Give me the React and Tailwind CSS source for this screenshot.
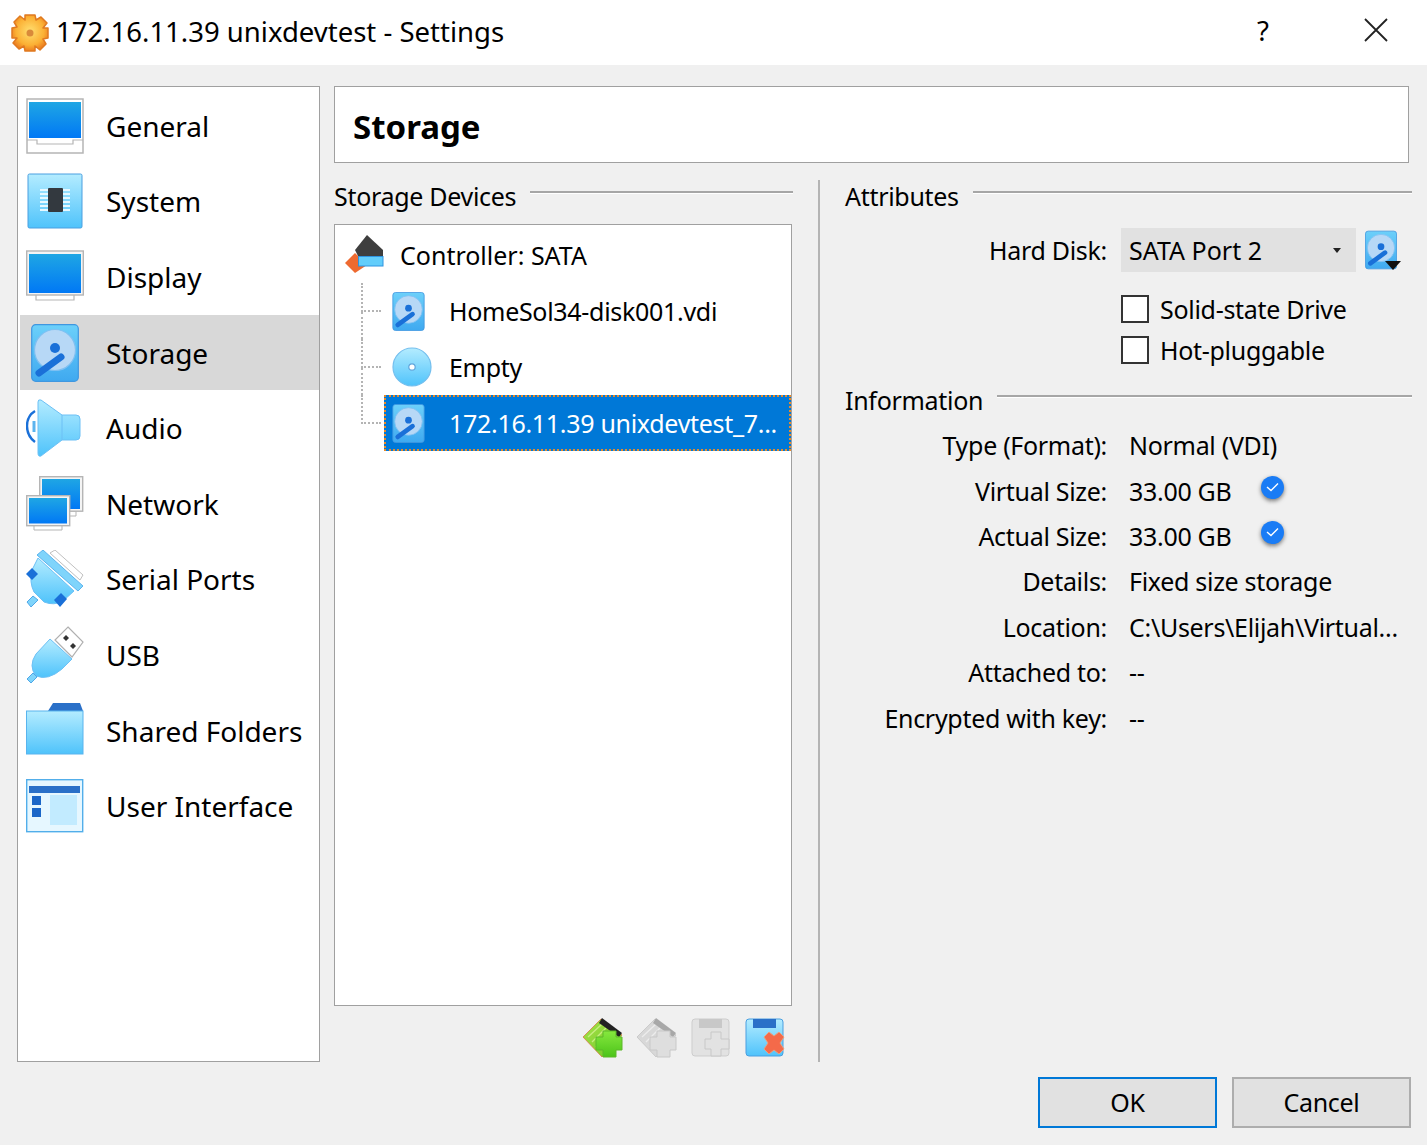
import React from 'react';

// shared gradient defs, each icon svg points at these ids
const Gradients = () => (
    <svg width="0" height="0" className="absolute">
        <defs>
            <linearGradient id="screen" x1="0" y1="0" x2="0" y2="1">
                <stop offset="0" stopColor="#1fa6e4" />
                <stop offset="1" stopColor="#0078f5" />
            </linearGradient>
            <linearGradient id="sky" x1="0" y1="0" x2="0" y2="1">
                <stop offset="0" stopColor="#b4ecff" />
                <stop offset="1" stopColor="#4fc3fb" />
            </linearGradient>
            <linearGradient id="hd" x1="0" y1="0" x2="0" y2="1">
                <stop offset="0" stopColor="#6cd0fa" />
                <stop offset="1" stopColor="#3fa9f0" />
            </linearGradient>
            <linearGradient id="leaf" x1="0" y1="0" x2="1" y2="1">
                <stop offset="0" stopColor="#a8e24a" />
                <stop offset="1" stopColor="#6cc824" />
            </linearGradient>
            <linearGradient id="plus" x1="0" y1="0" x2="0" y2="1">
                <stop offset="0" stopColor="#86e83e" />
                <stop offset="1" stopColor="#4cc41a" />
            </linearGradient>
            <radialGradient id="gear" cx="0.5" cy="0.45" r="0.6">
                <stop offset="0" stopColor="#ffdf70" />
                <stop offset="0.65" stopColor="#fbb034" />
                <stop offset="1" stopColor="#e8701a" />
            </radialGradient>
        </defs>
    </svg>
);

const Icon58 = ({ children }) => (
    <svg width="58" height="58" viewBox="0 0 58 58" className="shrink-0">{children}</svg>
);

const GeneralIcon = () => (
    <Icon58>
        <rect x="1" y="2" width="56" height="54" fill="#fff" stroke="#b5b5b5" strokeWidth="1.5" />
        <rect x="3" y="5" width="52" height="36" fill="url(#screen)" />
        <path d="M1 43H11V47H47V43H57" fill="none" stroke="#b5b5b5" strokeWidth="1.2" />
    </Icon58>
);

const SystemIcon = () => (
    <Icon58>
        <rect x="2" y="2" width="54" height="54" rx="1.5" fill="url(#sky)" stroke="#4a9fe0" />
        <path d="M14 18H44M14 22H44M14 26H44M14 30H44M14 34H44M14 38H44" stroke="#e6f8ff" strokeWidth="2" />
        <rect x="22" y="16" width="15" height="24" rx="1" fill="#33393f" />
    </Icon58>
);

const DisplayIcon = () => (
    <Icon58>
        <path d="M10 46H48V52H10Z" fill="#fff" stroke="#b5b5b5" strokeWidth="1.2" />
        <rect x="0.7" y="3" width="56.6" height="44" fill="#f4f4f4" stroke="#b5b5b5" strokeWidth="1.4" />
        <rect x="3" y="6" width="52" height="39" fill="url(#screen)" />
    </Icon58>
);

// hard disk drawing, used in the sidebar, the tree and next to the combo box
const DiskIcon = ({ w = 48, h = 58 }) => (
    <svg width={w} height={h} viewBox="0 0 48 58" className="shrink-0">
        <rect x="0.7" y="0.7" width="46.6" height="56.6" rx="4" fill="url(#hd)" stroke="#3f97e0" strokeWidth="1.2" />
        <circle cx="24" cy="26" r="20.5" fill="#b7d8f6" stroke="#7fc0f2" strokeWidth="1.2" />
        <circle cx="24" cy="24" r="5" fill="#1a70d8" />
        <path d="M30 33L8 49" stroke="#1a70d8" strokeWidth="7" strokeLinecap="round" />
    </svg>
);

const StorageIcon = () => (
    <div className="w-[58px] flex justify-center shrink-0">
        <DiskIcon />
    </div>
);

const AudioIcon = () => (
    <Icon58>
        <path d="M1 27Q1 17 9 12" fill="none" stroke="#1a70d8" strokeWidth="2.4" />
        <path d="M1 27Q1 37 9 43" fill="none" stroke="#1a70d8" strokeWidth="2.4" />
        <path d="M8 22V33" stroke="#5cb4ee" strokeWidth="3" />
        <path d="M12 3Q12 0 15 1L36 16H50Q54 16 54 20V37Q54 41 50 41H36L15 57Q12 58 12 54Z" fill="url(#sky)" stroke="#6cc0f5" />
        <path d="M36 16V41" stroke="#6cc0f5" />
    </Icon58>
);

const NetworkIcon = () => (
    <Icon58>
        <path d="M24 36H50V41H24Z" fill="#fff" stroke="#b5b5b5" />
        <rect x="13.7" y="1.7" width="43" height="34.5" fill="#f4f4f4" stroke="#b5b5b5" strokeWidth="1.4" />
        <rect x="16" y="4" width="38" height="30" fill="url(#screen)" />
        <path d="M8 50H36V55H8Z" fill="#fff" stroke="#b5b5b5" />
        <rect x="0.7" y="20.7" width="43" height="30" fill="#f4f4f4" stroke="#b5b5b5" strokeWidth="1.4" />
        <rect x="3" y="23" width="38" height="25.5" fill="url(#screen)" />
    </Icon58>
);

const SerialIcon = () => (
    <Icon58>
        <path d="M29 0L57 25L54 30L24 3Z" fill="#fff" stroke="#c0c0c0" />
        <path d="M17 0L57 36L52 41L11 5Z" fill="#7fd4fb" stroke="#5cb4ee" />
        <path d="M12 8L48 41L37 51Q28 56 18 52L8 42Q3 32 6 20Z" fill="url(#sky)" stroke="#6cc0f5" />
        <path d="M0 24L6 18L12 24L6 30Z" fill="#1a70d8" />
        <path d="M28 50L35 43L41 49L34 57Z" fill="#1a70d8" />
        <path d="M1 52L7 46L12 50L5 57Z" fill="#7fd4fb" stroke="#4fa8e8" />
    </Icon58>
);

const UsbIcon = () => (
    <Icon58>
        <path d="M42 1L57 16L46 31L29 14Z" fill="#fff" stroke="#b0b0b0" strokeWidth="1.2" />
        <path d="M37 12L40 9L43 12L40 15Z" fill="#333" />
        <path d="M44 20L47 17L50 20L47 23Z" fill="#333" />
        <path d="M24 13L46 33L36 43Q22 55 10 50Q2 40 10 28Z" fill="url(#sky)" stroke="#6cc0f5" />
        <path d="M1 53L7 47L11 51L5 57Z" fill="#7fd4fb" stroke="#4fa8e8" />
    </Icon58>
);

const FolderIcon = () => (
    <Icon58>
        <path d="M22 9L27 1H54L57 9Z" fill="#2a70c8" />
        <rect x="0.5" y="9" width="56.5" height="43" fill="url(#sky)" stroke="#58b4ee" />
    </Icon58>
);

const InterfaceIcon = () => (
    <Icon58>
        <rect x="0.7" y="2.7" width="56" height="52" fill="#e6f7ff" stroke="#52aeea" strokeWidth="1.4" />
        <rect x="3" y="9" width="51" height="7" fill="#2a70c8" />
        <rect x="6" y="19" width="9" height="9" fill="#1a66c8" />
        <rect x="6" y="31" width="9" height="9" fill="#1a66c8" />
        <rect x="24" y="18" width="27" height="30" fill="#c2ebff" />
    </Icon58>
);

const ControllerIcon = () => (
    <svg width="44" height="44" viewBox="0 0 44 44" className="shrink-0">
        <path d="M1 30L11 20L23 32L11 40Z" fill="#ee6a30" />
        <path d="M23 2L39 17V23H14L11 17Z" fill="#3e3e3e" />
        <rect x="14.5" y="23.5" width="24.5" height="9.5" fill="#62cdfb" stroke="#2f94e0" />
    </svg>
);

const EmptyDisc = () => (
    <svg width="40" height="40" viewBox="0 0 40 40" className="shrink-0">
        <circle cx="20" cy="20" r="19" fill="url(#sky)" stroke="#74bfee" strokeWidth="1.2" />
        <circle cx="20" cy="20" r="3.2" fill="#fff" stroke="#5fa5dc" strokeWidth="1.2" />
    </svg>
);

const GearIcon = () => (
    <svg width="40" height="40" viewBox="0 0 40 40" className="shrink-0">
        <g fill="url(#gear)" stroke="#e07a20" strokeWidth="1.5" strokeLinejoin="round">
            <path d="M15 2H25L26 7L31 4L37 10L33 15L38 15V25L33 26L36 31L30 37L25 33V38H15L14 33L9 36L3 30L7 25L2 25V15L7 14L4 9L10 3L15 7Z" />
        </g>
        <circle cx="20" cy="20" r="3.5" fill="#d98a3a" />
    </svg>
);

const GreenAdd = ({ gray }) => (
    <svg width="40" height="40" viewBox="0 0 40 40" className="shrink-0">
        <path d="M0 19L18 1L39 17L19 39Z" fill={gray ? '#d8d8d8' : 'url(#leaf)'} stroke={gray ? '#c4c4c4' : '#d97a4a'} strokeWidth="0.8" />
        <path d="M5 19L19 6M9 24L23 10M13 29L27 14" stroke={gray ? '#ececec' : '#c6ee80'} strokeWidth="1.4" />
        <path d="M19 0L39 15L36 19L16 5Z" fill={gray ? '#a8a8a8' : '#222'} />
        <path d="M20 13H33V19H39V32H33V39H20V32H13V19H20Z" fill={gray ? '#dedede' : 'url(#plus)'} stroke={gray ? '#c8c8c8' : '#5cb82a'} />
    </svg>
);

const Floppy = ({ children, gray }) => (
    <svg width="40" height="40" viewBox="0 0 40 40" className="shrink-0">
        <rect x="1" y="1" width="37" height="37" rx="3" fill={gray ? '#e2e2e2' : 'url(#sky)'} stroke={gray ? '#cdcdcd' : '#4a9fe0'} />
        <rect x="8" y="1" width="23" height="9" fill={gray ? '#c8c8c8' : '#2a70c8'} />
        {children}
    </svg>
);

const FloppyAdd = () => (
    <Floppy gray>
        <path d="M20 14H30V21H38V31H30V38H20V31H14V21H20Z" fill="#e2e2e2" stroke="#c8c8c8" />
    </Floppy>
);

const FloppyRemove = () => (
    <Floppy>
        <path d="M19 19L24 14L29 18L34 14L39 19L35 25L39 31L34 36L29 32L24 36L19 31L23 25Z" fill="#f46a4a" stroke="#e8a080" />
    </Floppy>
);

const sections = [
    { name: 'General', icon: <GeneralIcon /> },
    { name: 'System', icon: <SystemIcon /> },
    { name: 'Display', icon: <DisplayIcon /> },
    { name: 'Storage', icon: <StorageIcon />, active: true },
    { name: 'Audio', icon: <AudioIcon /> },
    { name: 'Network', icon: <NetworkIcon /> },
    { name: 'Serial Ports', icon: <SerialIcon /> },
    { name: 'USB', icon: <UsbIcon /> },
    { name: 'Shared Folders', icon: <FolderIcon /> },
    { name: 'User Interface', icon: <InterfaceIcon /> },
];

const GroupTitle = ({ children }) => (
    <div className="flex h-[34px] items-center gap-[14px]">
        <span className="whitespace-nowrap -mt-[2px]">{children}</span>
        <div className="flex-1 h-[3px] -mt-[10px] border-t-2 border-[#a6a6a6] border-b border-b-white" />
    </div>
);

const TreeChild = ({ icon, label, last, selected }) => (
    <div className="flex h-[56px] pl-[26px]">
        <div className="w-[23px] shrink-0 flex flex-col">
            <div className="h-[29px] border-l-2 border-b-2 border-dotted border-[#b4b4b4] mr-[3px]" />
            {!last && <div className="flex-1 border-l-2 border-dotted border-[#b4b4b4]" />}
        </div>
        <div className={`flex flex-1 min-w-0 items-center pl-[6px] border-2 border-dotted ${selected ? 'bg-[#0078d7] text-white border-[#e88a2a]' : 'border-transparent'}`}>
            <div className="w-[57px] shrink-0">{icon}</div>
            <span className="whitespace-nowrap">{label}</span>
        </div>
    </div>
);

const CheckRow = ({ label }) => (
    <div className="flex items-center h-[28px] gap-[11px]">
        <div className="w-[28px] h-[28px] bg-white border-2 border-[#333]" />
        <span>{label}</span>
    </div>
);

const VerifiedBadge = () => (
    <span className="ml-[30px] -mt-[8px] w-[23px] h-[23px] rounded-full bg-[#1a7cf5] shadow-[0_2px_4px_rgba(0,0,0,0.5)] flex items-center justify-center">
        <svg width="13" height="10" viewBox="0 0 13 10">
            <path d="M1 5L5 8.5L12 1.5" fill="none" stroke="#fff" strokeWidth="1.4" />
        </svg>
    </span>
);

const infoRows = [
    ['Type (Format):', 'Normal (VDI)'],
    ['Virtual Size:', '33.00 GB', true],
    ['Actual Size:', '33.00 GB', true],
    ['Details:', 'Fixed size storage'],
    ['Location:', 'C:\\Users\\Elijah\\Virtual...'],
    ['Attached to:', '--'],
    ['Encrypted with key:', '--'],
];

export default function App() {
    return (
        <div className="w-[1427px] h-[1145px] overflow-hidden bg-[#f0f0f0] text-black text-[25px] tracking-[-0.3px] leading-none font-['Noto_Sans','Open_Sans',sans-serif]">
            <Gradients />

            {/* title bar */}
            <div className="h-[65px] bg-white flex items-center pl-[10px] text-[27.5px] tracking-normal">
                <GearIcon />
                <span className="ml-[6px] -mt-[2px]">172.16.11.39 unixdevtest - Settings</span>
                <span className="ml-auto -mt-[4px]">?</span>
                <svg width="24" height="24" viewBox="0 0 24 24" className="ml-[95px] mr-[39px] -mt-[5px]">
                    <path d="M1 1L23 23M23 1L1 23" stroke="#222" strokeWidth="1.8" />
                </svg>
            </div>

            <div className="flex pt-[21px] pl-[17px]">
                {/* section list */}
                <div className="w-[303px] h-[976px] shrink-0 bg-white border border-[#a0a0a0] pt-[1px] pl-[2px] pr-0 text-[28px] tracking-normal">
                    {sections.map((s) => (
                        <div key={s.name} className={`h-[75.6px] flex items-center pl-[6px] gap-[22px] ${s.active ? 'bg-[#d8d8d8]' : ''}`}>
                            {s.icon}
                            <span className="whitespace-nowrap">{s.name}</span>
                        </div>
                    ))}
                </div>

                <div className="ml-[14px] w-[1078px]">
                    <div className="w-[1075px] h-[77px] bg-white border border-[#a0a0a0] flex items-center pl-[18px] pt-[3px] font-bold text-[33px] tracking-normal">Storage</div>

                    <div className="flex mt-[17px] h-[882px]">
                        {/* storage devices */}
                        <div className="w-[459px] shrink-0 flex flex-col">
                            <GroupTitle>Storage Devices</GroupTitle>
                            <div className="mt-[10px] w-[458px] h-[782px] bg-white border border-[#a0a0a0] pt-[2px] overflow-hidden">
                                <div className="flex h-[56px] items-center pl-[9px]">
                                    <ControllerIcon />
                                    <span className="ml-[12px] tracking-normal">Controller: SATA</span>
                                </div>
                                <TreeChild icon={<DiskIcon w={33} h={39} />} label="HomeSol34-disk001.vdi" />
                                <TreeChild icon={<EmptyDisc />} label="Empty" />
                                <TreeChild icon={<DiskIcon w={33} h={39} />} label="172.16.11.39 unixdevtest_7..." last selected />
                            </div>
                            <div className="flex justify-end gap-[14px] pr-[8px] mt-[12px]">
                                <GreenAdd />
                                <GreenAdd gray />
                                <FloppyAdd />
                                <FloppyRemove />
                            </div>
                        </div>

                        <div className="w-[2px] bg-[#b4b4b4] ml-[25px] mr-[25px] shrink-0" />

                        {/* attributes */}
                        <div className="w-[567px] shrink-0">
                            <GroupTitle>Attributes</GroupTitle>
                            <div className="flex items-center mt-[14px] h-[44px]">
                                <span className="w-[262px] shrink-0 text-right">Hard Disk:</span>
                                <div className="ml-[14px] w-[235px] h-[44px] bg-[#e1e1e1] flex items-center justify-between pl-[8px] pr-[15px]">
                                    <span className="tracking-normal">SATA Port 2</span>
                                    <svg width="8" height="5" viewBox="0 0 8 5">
                                        <path d="M0 0H8L4 5Z" fill="#222" />
                                    </svg>
                                </div>
                                <div className="relative ml-[9px]">
                                    <DiskIcon w={32} h={40} />
                                    <svg width="16" height="9" viewBox="0 0 16 9" className="absolute -right-[4px] bottom-0">
                                        <path d="M0 0H16L8 9Z" fill="#111" />
                                    </svg>
                                </div>
                            </div>
                            <div className="ml-[276px] mt-[23px] flex flex-col gap-[13px]">
                                <CheckRow label="Solid-state Drive" />
                                <CheckRow label="Hot-pluggable" />
                            </div>

                            <div className="mt-[20px]">
                                <GroupTitle>Information</GroupTitle>
                            </div>
                            <div className="mt-[5px]">
                                {infoRows.map(([label, value, verified]) => (
                                    <div key={label} className="flex items-center h-[45.4px]">
                                        <span className="w-[262px] shrink-0 text-right whitespace-nowrap">{label}</span>
                                        <span className="ml-[22px] whitespace-nowrap">{value}</span>
                                        {verified && <VerifiedBadge />}
                                    </div>
                                ))}
                            </div>
                        </div>
                    </div>
                </div>
            </div>

            <div className="flex justify-end gap-[15px] pr-[16px] mt-[15px]">
                <button className="w-[179px] h-[51px] bg-[#e1e1e1] border-2 border-[#0078d7]">OK</button>
                <button className="w-[179px] h-[51px] bg-[#e1e1e1] border-2 border-[#adadad]">Cancel</button>
            </div>
        </div>
    );
}
